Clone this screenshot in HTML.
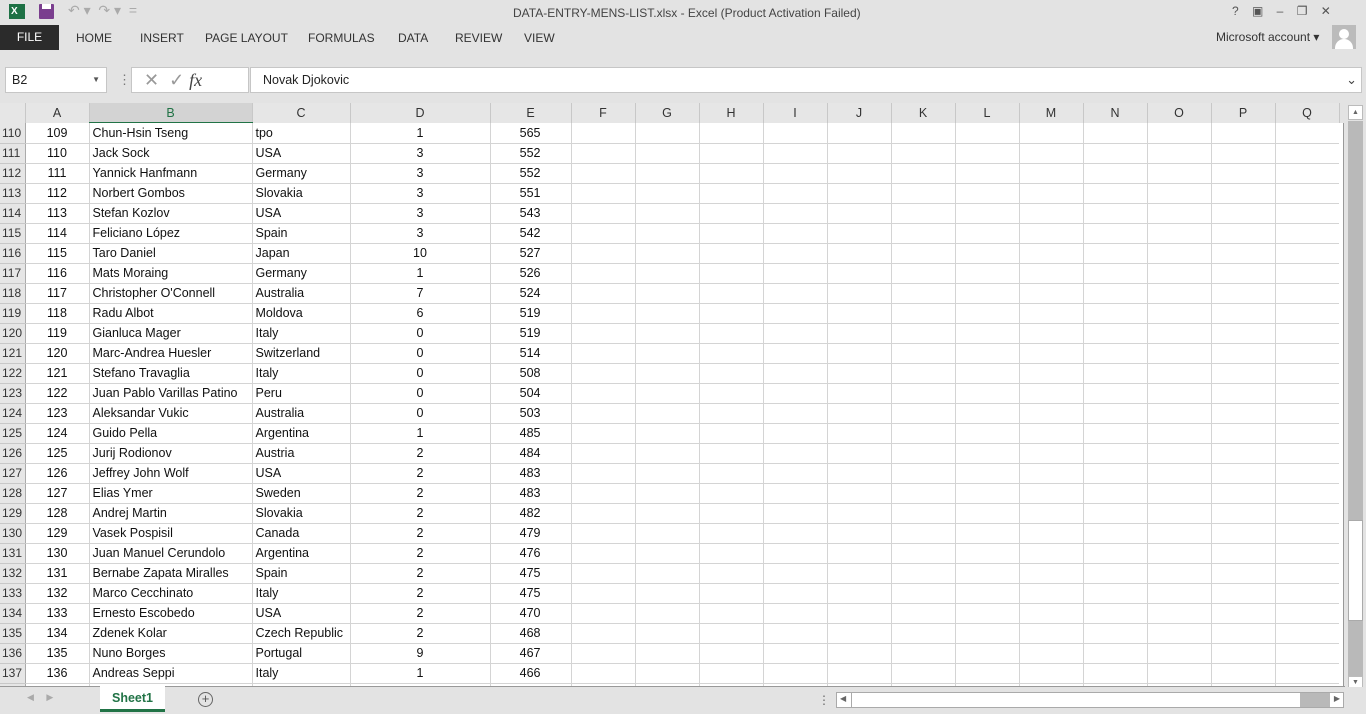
<!DOCTYPE html>
<html><head><meta charset="utf-8"><style>
*{margin:0;padding:0;box-sizing:border-box}
body{width:1366px;height:714px;overflow:hidden;background:#e3e3e3;font-family:"Liberation Sans",sans-serif;position:relative;color:#222}
.abs{position:absolute}
.tab{position:absolute;top:31px;font-size:12px;color:#333}
table{border-collapse:collapse;position:absolute;left:0;top:103px;table-layout:fixed;background:#fff}
td{height:20px;border-right:1px solid #d4d4d4;border-bottom:1px solid #d4d4d4;font-size:12.5px;white-space:nowrap;overflow:hidden;padding:0 3px;color:#111}
tr.h td{height:20px;background:#e6e6e6;text-align:center;border-right:1px solid #c8c8c8;border-bottom:1px solid #ababab;color:#333;font-size:12.5px}
td.rh{background:#e6e6e6;border-right:1px solid #ababab;border-bottom:1px solid #c8c8c8;color:#333;padding:0 2px;font-size:12px}
td.c{text-align:center}td.r{text-align:right;padding-right:30px}
</style></head><body>
<div class="abs" style="left:0;top:0;width:1366px;height:24px">
<div class="abs" style="left:9px;top:4px;width:16px;height:15px;background:#1e7145;color:#fff;font-size:10px;font-weight:bold;line-height:15px;padding-left:2px">X</div>
<div class="abs" style="left:39px;top:4px;width:15px;height:15px;background:#7a3e8e;border-radius:1px"><div class="abs" style="left:3px;top:0;width:9px;height:5px;background:#fff"></div></div>
<div class="abs" style="left:68px;top:2px;font-size:14px;color:#aaa">↶ ▾ &nbsp;↷ ▾ &nbsp;=</div>
<div class="abs" style="left:513px;top:6px;font-size:12px;color:#444">DATA-ENTRY-MENS-LIST.xlsx - Excel (Product Activation Failed)</div>
<div class="abs" style="left:1232px;top:4px;font-size:12px;color:#555">? &nbsp;&nbsp;&nbsp;▣ &nbsp;&nbsp;&nbsp;– &nbsp;&nbsp;&nbsp;❐ &nbsp;&nbsp;&nbsp;✕</div>
</div>
<div class="abs" style="left:0;top:25px;width:59px;height:25px;background:#2b2b2b;color:#fff;font-size:12px;line-height:25px;text-align:center">FILE</div>
<div class="tab" style="left:76px">HOME</div><div class="tab" style="left:140px">INSERT</div><div class="tab" style="left:205px">PAGE LAYOUT</div><div class="tab" style="left:308px">FORMULAS</div><div class="tab" style="left:398px">DATA</div><div class="tab" style="left:455px">REVIEW</div><div class="tab" style="left:524px">VIEW</div>
<div class="abs" style="left:1216px;top:30px;font-size:12px;color:#333">Microsoft account ▾</div>
<div class="abs" style="left:1332px;top:25px;width:24px;height:24px;background:#bbb"><div class="abs" style="left:7px;top:4px;width:10px;height:10px;border-radius:50%;background:#fff"></div><div class="abs" style="left:3px;top:14px;width:18px;height:10px;border-radius:9px 9px 0 0;background:#fff"></div></div>
<div class="abs" style="left:5px;top:67px;width:102px;height:26px;background:#fff;border:1px solid #c6c6c6;font-size:12.5px;line-height:24px;padding-left:6px">B2<span style="position:absolute;right:6px;font-size:8px;color:#555">▼</span></div>
<div class="abs" style="left:118px;top:72px;font-size:13px;color:#777">⋮</div>
<div class="abs" style="left:131px;top:67px;width:118px;height:26px;background:#fff;border:1px solid #c6c6c6;font-size:18px;line-height:24px;color:#999;padding-left:12px">✕ &nbsp;✓ <i style="font-family:'Liberation Serif';color:#444">fx</i></div>
<div class="abs" style="left:250px;top:67px;width:1112px;height:26px;background:#fff;border:1px solid #c6c6c6;font-size:12.5px;line-height:24px;padding-left:12px">Novak Djokovic<span style="position:absolute;right:4px;top:0;font-size:13px;color:#444">⌄</span></div>
<table>
<colgroup><col style="width:25px"><col style="width:64px"><col style="width:163px"><col style="width:98px"><col style="width:140px"><col style="width:81px"><col style="width:64px"><col style="width:64px"><col style="width:64px"><col style="width:64px"><col style="width:64px"><col style="width:64px"><col style="width:64px"><col style="width:64px"><col style="width:64px"><col style="width:64px"><col style="width:64px"><col style="width:64px"></colgroup>
<tr class="h"><td style="background:#e6e6e6"></td><td>A</td><td style="background:#d3d3d3;color:#217346;border-bottom:2px solid #217346">B</td><td>C</td><td>D</td><td>E</td><td>F</td><td>G</td><td>H</td><td>I</td><td>J</td><td>K</td><td>L</td><td>M</td><td>N</td><td>O</td><td>P</td><td>Q</td></tr>
</table>
<table id="t" style="top:123px"></table>
<div class="abs" style="left:1339px;top:123px;width:5px;height:563px;background:#fff;border-right:1px solid #999"></div>
<div class="abs" style="left:1345px;top:103px;width:21px;height:583px;background:#e3e3e3"></div>
<div class="abs" style="left:1348px;top:105px;width:15px;height:15px;background:#fff;border:1px solid #bbb;font-size:7px;text-align:center;line-height:13px;color:#666">▲</div>
<div class="abs" style="left:1348px;top:121px;width:15px;height:555px;background:#b9b9b9"></div>
<div class="abs" style="left:1348px;top:520px;width:15px;height:101px;background:#fff;border:1px solid #aaa"></div>
<div class="abs" style="left:1348px;top:676px;width:15px;height:14px;background:#fff;border:1px solid #bbb;font-size:7px;text-align:center;line-height:12px;color:#666">▼</div>
<div class="abs" style="left:0;top:686px;width:1345px;height:1px;background:#999"></div>
<div class="abs" style="left:0;top:687px;width:1366px;height:27px;background:#e3e3e3"></div>
<div class="abs" style="left:27px;top:692px;font-size:9px;color:#aaa">◀ &nbsp;&nbsp;&nbsp;&nbsp;▶</div>
<div class="abs" style="left:100px;top:686px;width:65px;height:26px;background:#fff;border-bottom:3px solid #217346;color:#217346;font-weight:bold;font-size:12.5px;text-align:center;line-height:24px">Sheet1</div>
<div class="abs" style="left:198px;top:692px;width:15px;height:15px;border:1px solid #666;border-radius:50%;font-size:13px;line-height:12px;text-align:center;color:#555">+</div>
<div class="abs" style="left:818px;top:693px;font-size:12px;color:#666">⋮</div>
<div class="abs" style="left:836px;top:692px;width:508px;height:16px;background:#fff;border:1px solid #aaa"><div class="abs" style="left:14px;top:0;width:448px;height:14px;border-left:1px solid #aaa"></div><div class="abs" style="right:13px;top:0;width:30px;height:14px;background:#b9b9b9"></div><span style="position:absolute;left:3px;font-size:8px;color:#666;top:1px">◀</span><span style="position:absolute;right:3px;font-size:8px;color:#666;top:1px">▶</span></div>
<script>
var d=[["Chun-Hsin Tseng","tpo",1,565],["Jack Sock","USA",3,552],["Yannick Hanfmann","Germany",3,552],["Norbert Gombos","Slovakia",3,551],["Stefan Kozlov","USA",3,543],["Feliciano López","Spain",3,542],["Taro Daniel","Japan",10,527],["Mats Moraing","Germany",1,526],["Christopher O'Connell","Australia",7,524],["Radu Albot","Moldova",6,519],["Gianluca Mager","Italy",0,519],["Marc-Andrea Huesler","Switzerland",0,514],["Stefano Travaglia","Italy",0,508],["Juan Pablo Varillas Patino","Peru",0,504],["Aleksandar Vukic","Australia",0,503],["Guido Pella","Argentina",1,485],["Jurij Rodionov","Austria",2,484],["Jeffrey John Wolf","USA",2,483],["Elias Ymer","Sweden",2,483],["Andrej Martin","Slovakia",2,482],["Vasek Pospisil","Canada",2,479],["Juan Manuel Cerundolo","Argentina",2,476],["Bernabe Zapata Miralles","Spain",2,475],["Marco Cecchinato","Italy",2,475],["Ernesto Escobedo","USA",2,470],["Zdenek Kolar","Czech Republic",2,468],["Nuno Borges","Portugal",9,467],["Andreas Seppi","Italy",1,466],["","","",""]];
var w=[25,64,163,98,140,81,64,64,64,64,64,64,64,64,64,64,64,64];
var h='<colgroup>'+w.map(function(x){return '<col style="width:'+x+'px">'}).join('')+'</colgroup>';
d.forEach(function(r,i){h+='<tr><td class="rh">'+(i<28?110+i:'')+'</td><td class="c">'+(i<28?109+i:'')+'</td><td>'+r[0]+'</td><td>'+r[1]+'</td><td class="c">'+r[2]+'</td><td class="r">'+r[3]+'</td>';for(var k=0;k<12;k++)h+='<td></td>';h+='</tr>'});
document.getElementById('t').innerHTML=h;
</script>
</body></html>
